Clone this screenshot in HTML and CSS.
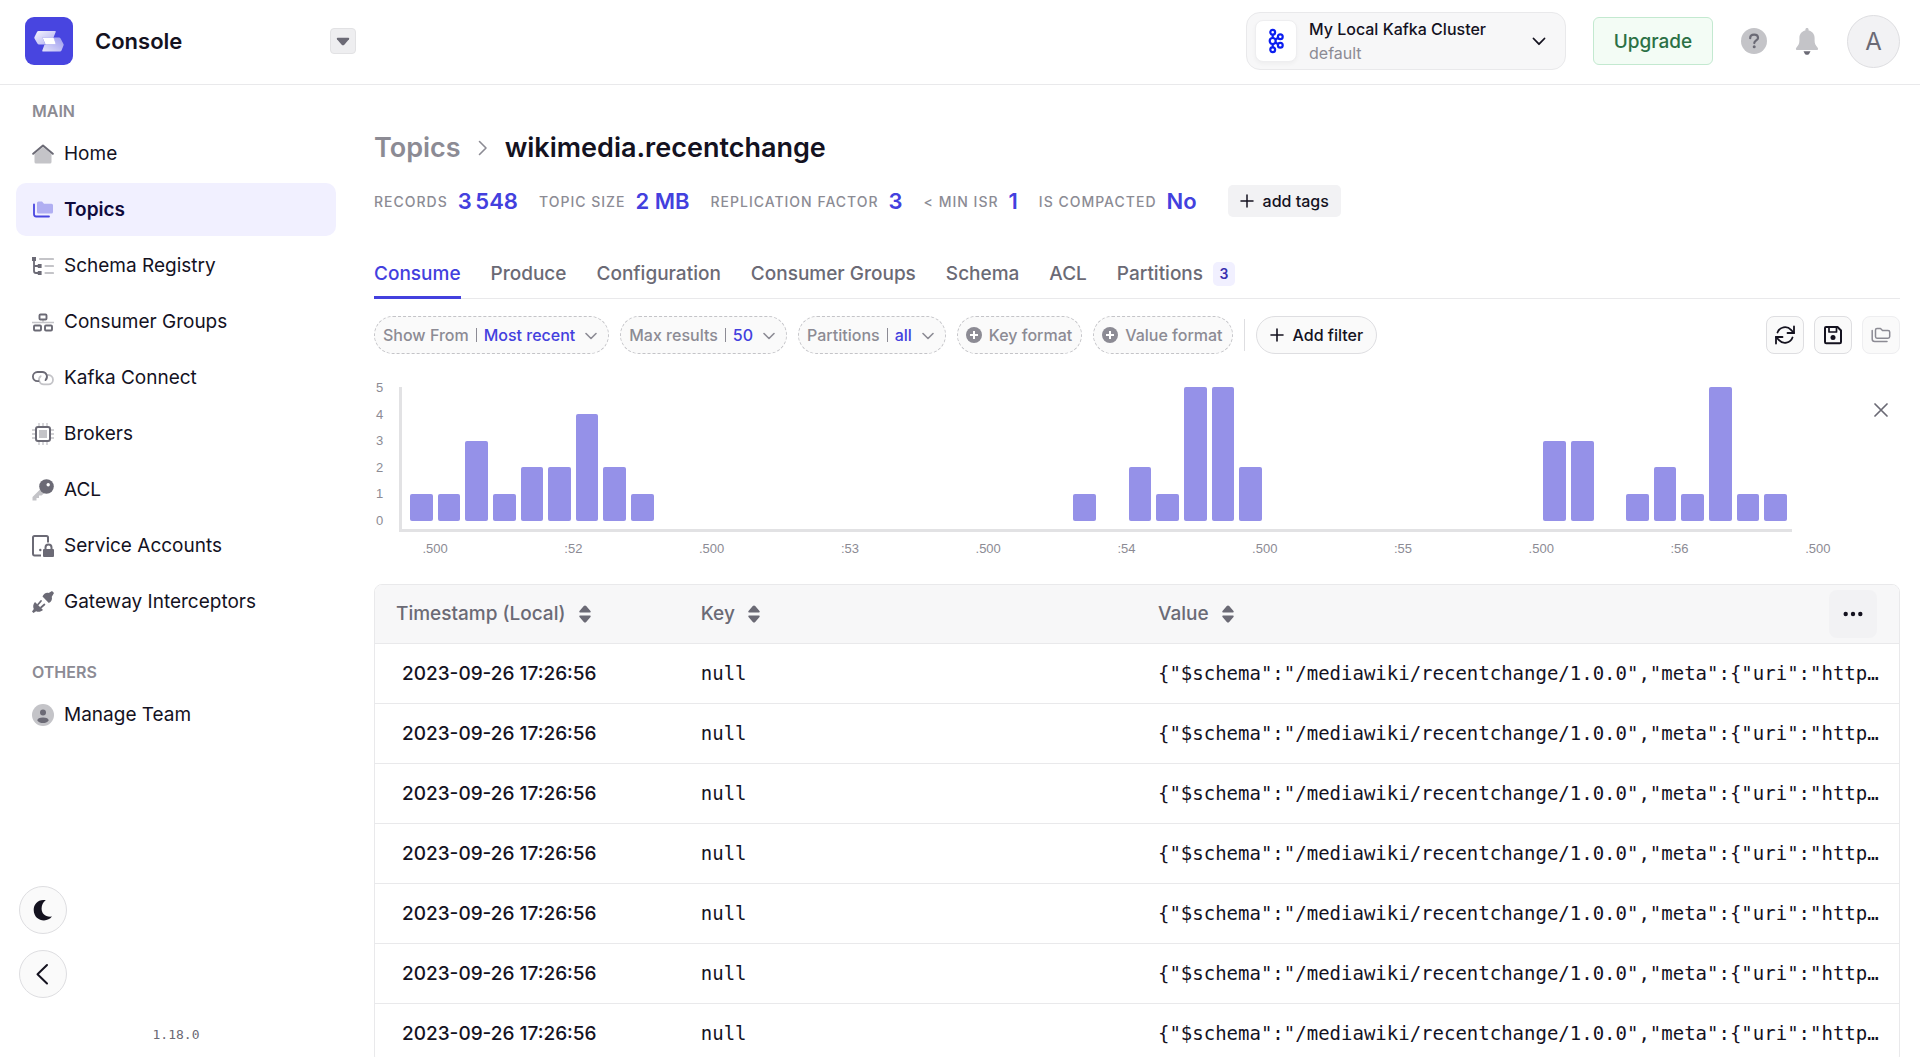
FILE: index.html
```html
<!DOCTYPE html>
<html lang="en">
<head>
<meta charset="utf-8">
<title>wikimedia.recentchange - Console</title>
<link rel="stylesheet" href="styles.css">
</head>
<body>
<header class="topbar">
  <div class="brand">
    <svg class="logo" viewBox="0 0 48 48" aria-hidden="true">
      <defs>
        <linearGradient id="lg1" x1="0" y1="0" x2="1" y2="1"><stop offset="0" stop-color="#fff" stop-opacity=".95"/><stop offset="1" stop-color="#fff" stop-opacity=".55"/></linearGradient>
        <linearGradient id="lg2" x1="1" y1="0" x2="0" y2="1"><stop offset="0" stop-color="#fff" stop-opacity=".45"/><stop offset="1" stop-color="#fff" stop-opacity=".85"/></linearGradient>
      </defs>
      <rect width="48" height="48" rx="9" fill="#4845e0"/>
      <path d="M13.500 14H30q1.200 0 .7 1.100L28.500 20.500H17.500L20 26.500q.3 1-.8 1H14q-1 0-1.600-1L9.500 21.500q-.4-.8 0-1.600L12 15q.5-1 1.500-1z" fill="url(#lg1)"/>
      <path d="M35 34.500H18q-1.200 0-.7-1.100L19.500 27.500H31L28.500 21.500q-.3-1 .8-1H34q1 0 1.600 1L38.500 27q.4.8 0 1.600L36.500 33.500q-.5 1-1.500 1z" fill="url(#lg2)"/>
      <path d="M17.500 20.500H28.500L31 27.500H20.500z" fill="#fff"/>
    </svg>
    <span class="brand-name">Console</span>
    <button class="brand-toggle" type="button" aria-label="Switch product"><svg width="14" height="9" viewBox="0 0 14 9"><path d="M1.500.8h11q1.200.4.5 1.500L8.300 7.700q-1.300 1.100-2.600 0L1 2.300Q.3 1.200 1.500.8z" fill="#6b6a75"/></svg></button>
  </div>
  <div class="top-actions">
    <button class="cluster" type="button">
      <span class="cluster-icon"><svg width="16" height="26" viewBox="0 0 16 26" fill="none" stroke="#0b1ef0" stroke-width="2.200"><circle cx="4.700" cy="4.300" r="2.400"/><circle cx="4.700" cy="13" r="3"/><circle cx="4.700" cy="21.700" r="2.400"/><circle cx="12.300" cy="8.700" r="2.400"/><circle cx="12.300" cy="17.300" r="2.400"/><path d="M4.700 6.500V10M4.700 16v3.500M7.300 11.500l3-1.700M7.300 14.500l3 1.700"/></svg></span>
      <span class="cluster-text"><span class="cluster-name">My Local Kafka Cluster</span><span class="cluster-sub">default</span></span>
      <svg width="14" height="9" viewBox="0 0 14 9" fill="none" stroke="#14121f" stroke-width="1.800" stroke-linecap="round" stroke-linejoin="round"><path d="M1.500 1.500L7 7.200l5.500-5.700"/></svg>
    </button>
    <button class="upgrade" type="button">Upgrade</button>
    <button class="bare" type="button" aria-label="Help"><svg width="26" height="26" viewBox="0 0 26 26"><circle cx="13" cy="13" r="13" fill="#c4c4c8"/><path d="M9.200 10.200c0-2.200 1.700-3.500 3.900-3.500s3.900 1.300 3.900 3.200c0 2.500-3.700 2.600-3.700 5.200" fill="none" stroke="#6b6a75" stroke-width="2.200" stroke-linecap="round"/><circle cx="13.200" cy="18.700" r="1.500" fill="#6b6a75"/></svg></button>
    <button class="bare" type="button" aria-label="Notifications"><svg width="24" height="28" viewBox="0 0 24 28"><path d="M12 1c1 0 1.600.7 1.600 1.600v.9c3.700.7 6 3.700 6 7.500v2.500c0 2.800.8 4.700 2.900 6.900 1.200 1.400.5 2.600-.9 2.600H2.400c-1.400 0-2.100-1.200-.9-2.600 2.100-2.200 2.900-4.100 2.900-6.900V11c0-3.800 2.300-6.800 6-7.500v-.9C10.400 1.700 11 1 12 1z" fill="#c4c4c8"/><path d="M8.500 24.300h7l-1.300 2.400q-.5 1-1.500 1h-1.400q-1 0-1.500-1z" fill="#6b6a75"/></svg></button>
    <button class="avatar" type="button" aria-label="Account">A</button>
  </div>
</header>
<div class="layout">
  <aside class="sidebar">
    <nav class="nav" aria-label="Console">
      <h2 class="nav-title">MAIN</h2>
      <a class="nav-item" href="#home"><svg viewBox="0 0 22 22"><path d="M2.500 11L11 4l8.500 7v8q0 1.500-1.500 1.500H4q-1.500 0-1.500-1.500z" fill="#c4c4c8"/><path d="M1.200 10.800L11 2.600l9.800 8.200" fill="none" stroke="#6b6a75" stroke-width="2" stroke-linecap="round" stroke-linejoin="round"/></svg>Home</a>
      <a class="nav-item active" href="#topics" aria-current="page"><svg viewBox="0 0 22 22"><path d="M5 4q0-1.500 1.500-1.500H10l2 2.300h7.500q1.500 0 1.500 1.500V13q0 1.500-1.500 1.500h-13Q5 14.500 5 13z" fill="#b0aef2"/><path d="M2 5.500v9.800q0 2.200 2.200 2.200H17" fill="none" stroke="#4845e0" stroke-width="1.800" stroke-linecap="round"/></svg>Topics</a>
      <a class="nav-item" href="#schema"><svg viewBox="0 0 22 22"><path d="M8 4h13M13.500 11H21M13.500 18H21" stroke="#c4c4c8" stroke-width="2.200" stroke-linecap="round"/><path d="M2 4v12q0 2 2 2h3M2 11h5" fill="none" stroke="#6b6a75" stroke-width="1.800"/><path d="M0 2h4v4H0zM5.800 9h3.800v4H5.800zM5.800 16h3.800v4H5.800z" fill="#6b6a75"/></svg>Schema Registry</a>
      <a class="nav-item" href="#groups"><svg viewBox="0 0 22 22" fill="none"><path d="M0 11.500h22M11 8v3.500" stroke="#c4c4c8" stroke-width="1.500"/><g stroke="#6b6a75" stroke-width="1.900"><rect x="7.500" y="3.500" width="7" height="5" rx="1"/><rect x="2" y="14.500" width="7" height="5" rx="1"/><rect x="13" y="14.500" width="7" height="5" rx="1"/></g></svg>Consumer Groups</a>
      <a class="nav-item" href="#connect"><svg viewBox="0 0 22 22" fill="none" stroke-width="1.800" stroke-linecap="round"><path d="M15.500 8h.8a4.700 4.700 0 0 1 0 9.400h-4.600a4.700 4.700 0 0 1-3-8.300" stroke="#c4c4c8"/><path d="M6.500 14.200h-1a4.600 4.600 0 0 1 0-9.200h4.800a4.700 4.700 0 0 1 3.200 8.100" stroke="#6b6a75"/></svg>Kafka Connect</a>
      <a class="nav-item" href="#brokers"><svg viewBox="0 0 22 22" fill="none"><path d="M7 0v22M11 0v22M15 0v22M0 7h22M0 11h22M0 15h22" stroke="#c4c4c8" stroke-width="1.300"/><rect x="4" y="4" width="14" height="14" rx="2" fill="#fff" stroke="#6b6a75" stroke-width="2"/><path d="M7 7h8v8H7z" fill="#c4c4c8"/></svg>Brokers</a>
      <a class="nav-item" href="#acl"><svg viewBox="0 0 22 22"><path d="M8 10.500L.5 18v3.500h4V19h2.500v-2.500h2.500L12.500 14z" fill="#c4c4c8"/><circle cx="14.500" cy="7.500" r="7.300" fill="#6b6a75"/><circle cx="16.200" cy="5.800" r="1.700" fill="#fff"/></svg>ACL</a>
      <a class="nav-item" href="#accounts"><svg viewBox="0 0 22 22" fill="none"><path d="M16 7.500V2.500q0-1.500-1.500-1.500h-12Q1 1 1 2.500v16Q1 20.500 2.500 20.500H9" stroke="#6b6a75" stroke-width="2"/><circle cx="8.300" cy="15" r="1.200" fill="#6b6a75"/><rect x="11" y="14" width="11" height="8" rx="1" fill="#6b6a75"/><path d="M13.500 14v-1.500a3 3 0 0 1 6 0V14" stroke="#6b6a75" stroke-width="2"/></svg>Service Accounts</a>
      <a class="nav-item" href="#gateway"><svg viewBox="0 0 22 22" fill="#6b6a75"><path d="M10.500 5.500l6.300 6.500c2.500-1 3.700-3.500 3-6.300L22 2 20 0l-3.300 2c-2.700-.7-5 .8-6.200 3.500z"/><path d="M3 11l8 8c-2.200 2-4.800 2.100-6.900 1.200L1.500 22 0 20.500l1.800-2.600C.8 15.800 1 13 3 11z"/><path d="M6 13.500l3-3.500M9 16.500l3.400-3" stroke="#6b6a75" stroke-width="1.800" stroke-linecap="round"/></svg>Gateway Interceptors</a>
      <h2 class="nav-title nav-title-second">OTHERS</h2>
      <a class="nav-item" href="#team"><svg viewBox="0 0 22 22"><circle cx="11" cy="11" r="11" fill="#c4c4c8"/><circle cx="11" cy="8.500" r="3" fill="#6b6a75"/><path d="M5.300 16.500c0-2 2.300-3 5.700-3s5.700 1 5.700 3c-1.500 2-3.500 2.500-5.700 2.500s-4.200-.5-5.700-2.500z" fill="#6b6a75"/></svg>Manage Team</a>
    </nav>
    <div class="side-foot">
      <button class="round" type="button" aria-label="Dark mode"><svg width="20" height="22" viewBox="0 0 20 22"><path d="M12.800 1.200C5.800-.3.700 4.500.7 11s5 10.400 10.300 10.400c3.400 0 6-1.300 7.900-3.800-6.600.8-10.300-3-10.300-8.100 0-3.500 1.500-6.500 4.200-8.300z" fill="#14121f"/></svg></button>
      <button class="round" type="button" aria-label="Collapse menu"><svg width="22" height="22" viewBox="0 0 22 22" fill="none" stroke="#14121f" stroke-width="2" stroke-linecap="round" stroke-linejoin="round"><path d="M15 2L5.500 11.200 15 20.500"/></svg></button>
      <span class="version">1.18.0</span>
    </div>
  </aside>
  <main class="main">
    <h1 class="crumbs"><a href="#topics">Topics</a><svg width="10" height="16" viewBox="0 0 10 16" fill="none" stroke="#8c8b94" stroke-width="1.600" stroke-linecap="round" stroke-linejoin="round"><path d="M1.500 1.500L8 8l-6.500 6.500"/></svg><span>wikimedia.recentchange</span></h1>
    <div class="stats">
      <span class="stat">RECORDS <b>3&#8201;548</b></span>
      <span class="stat">TOPIC SIZE <b>2 MB</b></span>
      <span class="stat">REPLICATION FACTOR <b>3</b></span>
      <span class="stat">&lt; MIN ISR <b>1</b></span>
      <span class="stat">IS COMPACTED <b>No</b></span>
      <button class="add-tags" type="button"><svg width="14" height="14" viewBox="0 0 14 14"><path d="M7 1v12M1 7h12" stroke="#14121f" stroke-width="1.500" stroke-linecap="round"/></svg>add tags</button>
    </div>
    <nav class="tabs" aria-label="Topic">
      <a class="tab current" href="#consume">Consume</a>
      <a class="tab" href="#produce">Produce</a>
      <a class="tab" href="#configuration">Configuration</a>
      <a class="tab" href="#consumer-groups">Consumer Groups</a>
      <a class="tab" href="#topic-schema">Schema</a>
      <a class="tab" href="#topic-acl">ACL</a>
      <a class="tab" href="#partitions">Partitions<span class="badge">3</span></a>
    </nav>
    <div class="filters">
      <button class="chip" type="button">Show From <i></i><b>Most recent</b><svg class="chev" viewBox="0 0 12 8"><path d="M1 1.500l5 5 5-5"/></svg></button>
      <button class="chip" type="button">Max results <i></i><b>50</b><svg class="chev" viewBox="0 0 12 8"><path d="M1 1.500l5 5 5-5"/></svg></button>
      <button class="chip" type="button">Partitions <i></i><b>all</b><svg class="chev" viewBox="0 0 12 8"><path d="M1 1.500l5 5 5-5"/></svg></button>
      <button class="chip" type="button"><svg class="plus" viewBox="0 0 16 16"><circle cx="8" cy="8" r="8" fill="#8c8b94"/><path d="M8 4v8M4 8h8" stroke="#fff" stroke-width="2"/></svg>Key format</button>
      <button class="chip" type="button"><svg class="plus" viewBox="0 0 16 16"><circle cx="8" cy="8" r="8" fill="#8c8b94"/><path d="M8 4v8M4 8h8" stroke="#fff" stroke-width="2"/></svg>Value format</button>
      <span class="divider"></span>
      <button class="chip chip-solid" type="button"><svg width="14" height="14" viewBox="0 0 14 14"><path d="M7 1v12M1 7h12" stroke="#14121f" stroke-width="1.600" stroke-linecap="round"/></svg>Add filter</button>
      <div class="tools">
        <button class="tool" type="button" aria-label="Refresh"><svg width="20" height="20" viewBox="0 0 20 20" fill="none" stroke="#14121f" stroke-width="1.800" stroke-linecap="round" stroke-linejoin="round"><path d="M19 1.500V8h-6.500M1 18.500V12h6.500"/><path d="M2.500 7.500A8 8 0 0 1 16 4.800L19 8M1 12l3 3.200a8 8 0 0 0 13.500-2.700"/></svg></button>
        <button class="tool" type="button" aria-label="Save"><svg width="20" height="20" viewBox="0 0 20 20" fill="none" stroke="#14121f" stroke-width="2" stroke-linejoin="round"><path d="M3 2h11.500L18 5.500V17q0 1.200-1.200 1.200H3.200Q2 18.200 2 17V3q0-1 1-1z"/><path d="M6 2v5h7.500V2" stroke-width="1.700"/><circle cx="10" cy="12.500" r="2.500" fill="#14121f" stroke="none"/></svg></button>
        <button class="tool tool-off" type="button" disabled aria-label="Saved views"><svg width="20" height="16" viewBox="0 0 20 16" fill="none" stroke="#8c8b94" stroke-width="1.500" stroke-linecap="round" stroke-linejoin="round"><path d="M4.500 3q0-1.500 1.500-1.500h3.500l2 2H17q1.700 0 1.700 1.500v4.500q0 1.700-1.700 1.700H6q-1.500 0-1.500-1.700z"/><path d="M1.200 3.500V12q0 2.500 2.500 2.500H16"/></svg></button>
      </div>
    </div>
    <section class="chart" aria-label="Records over time">
      <div class="y-labels"><span>5</span><span>4</span><span>3</span><span>2</span><span>1</span><span>0</span></div>
      <div class="plot">
        <span class="bar" style="grid-column:1;height:20%"></span><span class="bar" style="grid-column:2;height:20%"></span><span class="bar" style="grid-column:3;height:60%"></span><span class="bar" style="grid-column:4;height:20%"></span><span class="bar" style="grid-column:5;height:40%"></span><span class="bar" style="grid-column:6;height:40%"></span><span class="bar" style="grid-column:7;height:80%"></span><span class="bar" style="grid-column:8;height:40%"></span><span class="bar" style="grid-column:9;height:20%"></span>
        <span class="bar" style="grid-column:25;height:20%"></span><span class="bar" style="grid-column:27;height:40%"></span><span class="bar" style="grid-column:28;height:20%"></span><span class="bar" style="grid-column:29;height:100%"></span><span class="bar" style="grid-column:30;height:100%"></span><span class="bar" style="grid-column:31;height:40%"></span>
        <span class="bar" style="grid-column:42;height:60%"></span><span class="bar" style="grid-column:43;height:60%"></span><span class="bar" style="grid-column:45;height:20%"></span><span class="bar" style="grid-column:46;height:40%"></span><span class="bar" style="grid-column:47;height:20%"></span><span class="bar" style="grid-column:48;height:100%"></span><span class="bar" style="grid-column:49;height:20%"></span><span class="bar" style="grid-column:50;height:20%"></span>
      </div>
      <button class="close" type="button" aria-label="Close chart"><svg width="14" height="14" viewBox="0 0 14 14"><path d="M1 1l12 12M13 1L1 13" stroke="#6b6a75" stroke-width="1.700" stroke-linecap="round"/></svg></button>
      <div class="x-labels"><span>.500</span><span>:52</span><span>.500</span><span>:53</span><span>.500</span><span>:54</span><span>.500</span><span>:55</span><span>.500</span><span>:56</span><span>.500</span></div>
    </section>
    <div class="table-box">
      <table class="records">
        <colgroup><col class="c-time"><col class="c-key"><col></colgroup>
        <thead><tr>
          <th><span class="th">Timestamp (Local)<svg class="sort" viewBox="0 0 12 18"><path d="M6 .5q.7 0 1.200.6L11.500 6q.6 1-.5 1.500H1Q-.1 7 .5 6l4.300-4.900Q5.300.5 6 .5zM6 17.500q-.7 0-1.200-.6L.5 12q-.6-1 .5-1.500h10q1.100.5.5 1.500l-4.300 4.900q-.5.600-1.200.6z" fill="#6b6a75"/></svg></span></th>
          <th><span class="th">Key<svg class="sort" viewBox="0 0 12 18"><path d="M6 .5q.7 0 1.200.6L11.500 6q.6 1-.5 1.500H1Q-.1 7 .5 6l4.300-4.900Q5.300.5 6 .5zM6 17.500q-.7 0-1.200-.6L.5 12q-.6-1 .5-1.500h10q1.100.5.5 1.500l-4.300 4.900q-.5.600-1.200.6z" fill="#6b6a75"/></svg></span></th>
          <th><span class="th">Value<svg class="sort" viewBox="0 0 12 18"><path d="M6 .5q.7 0 1.200.6L11.500 6q.6 1-.5 1.500H1Q-.1 7 .5 6l4.300-4.900Q5.300.5 6 .5zM6 17.500q-.7 0-1.200-.6L.5 12q-.6-1 .5-1.500h10q1.100.5.5 1.500l-4.300 4.900q-.5.600-1.200.6z" fill="#6b6a75"/></svg><button class="more" type="button" aria-label="Columns"><svg width="20" height="6" viewBox="0 0 20 6" fill="#14121f"><circle cx="2.700" cy="3" r="2.200"/><circle cx="10" cy="3" r="2.200"/><circle cx="17.300" cy="3" r="2.200"/></svg></button></span></th>
        </tr></thead>
        <tbody>
          <tr><td class="time">2023-09-26 17:26:56</td><td class="mono">null</td><td class="mono">{"$schema":"/mediawiki/recentchange/1.0.0","meta":{"uri":"http…</td></tr>
          <tr><td class="time">2023-09-26 17:26:56</td><td class="mono">null</td><td class="mono">{"$schema":"/mediawiki/recentchange/1.0.0","meta":{"uri":"http…</td></tr>
          <tr><td class="time">2023-09-26 17:26:56</td><td class="mono">null</td><td class="mono">{"$schema":"/mediawiki/recentchange/1.0.0","meta":{"uri":"http…</td></tr>
          <tr><td class="time">2023-09-26 17:26:56</td><td class="mono">null</td><td class="mono">{"$schema":"/mediawiki/recentchange/1.0.0","meta":{"uri":"http…</td></tr>
          <tr><td class="time">2023-09-26 17:26:56</td><td class="mono">null</td><td class="mono">{"$schema":"/mediawiki/recentchange/1.0.0","meta":{"uri":"http…</td></tr>
          <tr><td class="time">2023-09-26 17:26:56</td><td class="mono">null</td><td class="mono">{"$schema":"/mediawiki/recentchange/1.0.0","meta":{"uri":"http…</td></tr>
          <tr><td class="time">2023-09-26 17:26:56</td><td class="mono">null</td><td class="mono">{"$schema":"/mediawiki/recentchange/1.0.0","meta":{"uri":"http…</td></tr>
        </tbody>
      </table>
    </div>
  </main>
</div>
</body>
</html>
```
FILE: styles.css
```css
* { box-sizing: border-box; }
body {
  margin: 0;
  height: 100vh;
  display: flex;
  flex-direction: column;
  overflow: hidden;
  background: #fff;
  color: #14121f;
  font-family: Inter, "Liberation Sans", sans-serif;
  font-size: 19px;
}
button { font: inherit; color: inherit; margin: 0; padding: 0; border: 0; background: none; cursor: pointer; }
a { color: inherit; text-decoration: none; }
h1, h2 { margin: 0; }
svg { display: block; flex: none; }

.topbar {
  flex: none;
  display: flex;
  align-items: center;
  justify-content: space-between;
  height: 85px;
  padding: 0 20px 2px 25px;
  border-bottom: 1px solid #e9e9eb;
}
.brand { display: flex; align-items: center; width: 331px; }
.logo { width: 48px; height: 48px; }
.brand-name { margin-left: 22px; font-size: 22px; font-weight: 600; }
.brand-toggle {
  display: grid;
  place-items: center;
  width: 26px;
  height: 26px;
  margin-left: auto;
  border: 1px solid #e2e2e4;
  border-radius: 4px;
  background: #eeeef0;
}
.top-actions { display: flex; align-items: center; gap: 28px; }
.cluster {
  display: flex;
  align-items: center;
  width: 320px;
  height: 58px;
  margin-right: -1px;
  padding: 0 19px 0 8px;
  border: 1px solid #e9e9eb;
  border-radius: 14px;
  background: #f7f7f8;
  text-align: left;
}
.cluster-icon {
  display: grid;
  place-items: center;
  width: 42px;
  height: 42px;
  border: 1px solid #eeeef0;
  border-radius: 8px;
  background: #fff;
  box-shadow: 0 2px 4px #0000000a;
}
.cluster-text { flex: 1; margin-left: 12px; font-size: 16px; line-height: 24px; }
.cluster-name, .cluster-sub { display: block; }
.cluster-name { font-weight: 500; }
.cluster-sub { color: #8c8b94; }
.upgrade {
  width: 120px;
  height: 48px;
  border: 1px solid #c3e9d0;
  border-radius: 6px;
  background: #f3fcf5;
  color: #2b7045;
  font-weight: 500;
}
.avatar {
  width: 53px;
  height: 53px;
  border: 1px solid #dedee1;
  border-radius: 50%;
  background: #f2f2f4;
  color: #6b6a75;
  font-size: 24px;
}

.layout { flex: 1; min-height: 0; display: flex; }
.sidebar {
  flex: none;
  display: flex;
  flex-direction: column;
  justify-content: space-between;
  width: 352px;
  padding: 16px 16px 11px;
}
.nav { display: flex; flex-direction: column; gap: 3px; }
.nav-title { padding: 0 0 3px 16px; color: #8c8b94; font-size: 16px; line-height: 20px; font-weight: 600; }
.nav-title-second { margin-top: 31px; }
.nav-item {
  display: flex;
  align-items: center;
  gap: 10px;
  height: 53px;
  padding-left: 16px;
  border-radius: 10px;
}
.nav-item svg { width: 22px; height: 22px; }
.nav-item.active { background: #f1f0ff; color: #0f0a3c; font-weight: 600; }
.side-foot { display: flex; flex-direction: column; gap: 16px; }
.round {
  display: grid;
  place-items: center;
  width: 48px;
  height: 48px;
  margin-left: 3px;
  border: 1px solid #dedee1;
  border-radius: 50%;
  background: #fafafa;
}
.version { align-self: center; margin-top: 10px; color: #6b6a75; font: 13px/22px "DejaVu Sans Mono", monospace; }

.main { flex: 1; min-width: 0; overflow: hidden; padding: 43px 20px 0 22px; }
.crumbs { display: flex; align-items: center; gap: 17px; font-size: 27px; line-height: 40px; font-weight: 600; }
.crumbs a { color: #8c8b94; }
.stats { display: flex; align-items: center; gap: 21px; margin-top: 17px; height: 32px; }
.stat { display: flex; align-items: center; gap: 10px; color: #8c8b94; font-size: 14px; font-weight: 500; letter-spacing: 1px; white-space: nowrap; }
.stat b { color: #4340de; font-size: 22px; font-weight: 600; letter-spacing: 0; }
.add-tags {
  display: flex;
  align-items: center;
  gap: 9px;
  height: 32px;
  margin-left: 10px;
  padding: 0 12px;
  border-radius: 5px;
  background: #f2f2f4;
  font-size: 16px;
  font-weight: 500;
}
.tabs { display: flex; gap: 30px; margin-top: 32px; border-bottom: 1px solid #e9e9eb; }
.tab {
  display: flex;
  align-items: center;
  gap: 10px;
  height: 50px;
  margin-bottom: -1px;
  padding-top: 2px;
  border-bottom: 3px solid transparent;
  color: #6b6a75;
  font-weight: 500;
  white-space: nowrap;
}
.tab.current { border-color: #4340de; color: #4340de; }
.badge {
  display: grid;
  place-items: center;
  width: 22px;
  height: 24px;
  border-radius: 5px;
  background: #f1f0ff;
  color: #3b30b0;
  font-size: 14px;
  font-weight: 600;
}
.filters { display: flex; align-items: center; gap: 11px; margin-top: 17px; }
.chip {
  display: flex;
  align-items: center;
  height: 38px;
  padding: 0 9px 0 8px;
  border: 1px dashed #c4c4c8;
  border-radius: 19px;
  background: #fafafa;
  color: #8c8b94;
  font-size: 16px;
  font-weight: 500;
  white-space: nowrap;
}
.chip i { width: 1px; height: 14px; margin: 0 7px; background: #8c8b94; }
.chip b { color: #4340de; font-weight: 500; }
.chev { width: 12px; height: 8px; margin: 1px 2px 0 10px; fill: none; stroke: #8c8b94; stroke-width: 1.6; stroke-linecap: round; stroke-linejoin: round; }
.plus { width: 16px; height: 16px; margin-right: 7px; }
.divider { width: 1px; height: 32px; background: #dedee1; }
.chip-solid { gap: 9px; padding: 0 13px; border: 1px solid #dedee1; color: #14121f; }
.tools { display: flex; gap: 10px; margin-left: auto; }
.tool {
  display: grid;
  place-items: center;
  width: 38px;
  height: 38px;
  border: 1px solid #dedee1;
  border-radius: 8px;
  background: #fafafa;
}
.tool-off { border-color: #eeeef0; }

.chart {
  display: grid;
  grid-template-columns: 25px 1fr 108px;
  grid-template-rows: 145px auto;
  margin-top: 33px;
  color: #8c8b94;
  font: 13px/16px "Liberation Sans", Arial, sans-serif;
}
.y-labels { display: flex; flex-direction: column; justify-content: space-between; height: 149px; margin-top: -7px; padding-left: 2px; }
.plot {
  display: grid;
  grid-template-columns: repeat(50, minmax(0, 1fr));
  grid-template-rows: 1fr;
  align-items: end;
  padding: 0 0 8px 8px;
  border-left: 3px solid #e2e2e4;
  border-bottom: 3px solid #e2e2e4;
}
.bar { grid-row: 1; margin-right: 5px; border-radius: 2px; background: #9591e8; }
.close { justify-self: end; align-self: start; padding: 4px; margin: 12px 8px 0 0; }
.x-labels { grid-column: 1 / -1; display: flex; margin: 9px 13px 0 -8px; }
.x-labels span { flex: 1; text-align: center; }

.table-box { margin-top: 27px; border: 1px solid #e9e9eb; border-radius: 8px; overflow: hidden; }
.records { width: 100%; border-collapse: collapse; table-layout: fixed; }
.c-time { width: 20%; }
.c-key { width: 30%; }
.records th { height: 58px; padding: 0 22px 0 21px; background: #f7f7f8; color: #6b6a75; font-weight: 500; text-align: left; }
.th { display: flex; align-items: center; gap: 13px; height: 48px; }
.sort { width: 12px; height: 18px; }
.more { display: grid; place-items: center; width: 48px; height: 48px; margin-left: auto; border-radius: 8px; background: #f2f2f4; }
.records td { height: 60px; padding: 0 22px 0 21px; border-top: 1px solid #e9e9eb; white-space: nowrap; }
.records .time { padding-left: 27px; font-weight: 500; }
.mono { font-family: "DejaVu Sans Mono", monospace; }
```
